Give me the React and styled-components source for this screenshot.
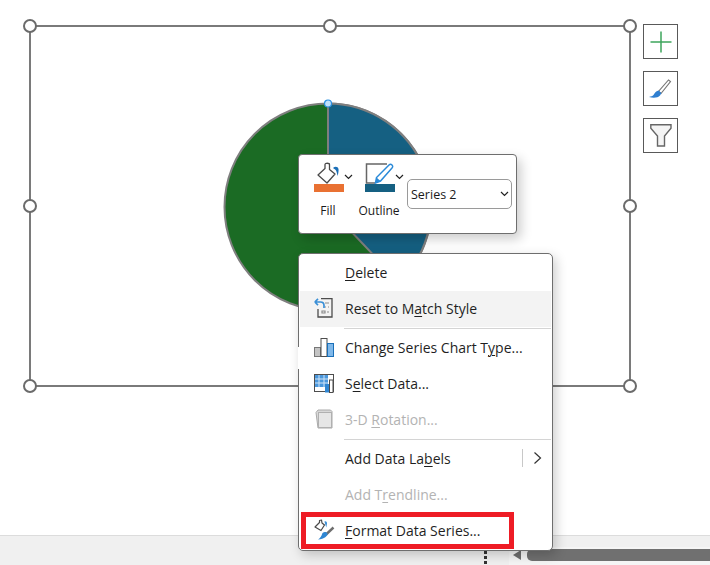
import React from "react";
import styled, { createGlobalStyle } from "styled-components";

const GlobalStyle = createGlobalStyle`
  html, body {
    margin: 0;
    padding: 0;
    background: #fff;
    overflow: hidden;
  }
  body {
    font-family: "Open Sans", "Liberation Sans", sans-serif;
  }
`;

const MENU_ITEMS = [
  { id: "delete", before: "", key: "D", after: "elete", raised: true },
  { id: "reset", before: "Reset to M", key: "a", after: "tch Style", icon: <ResetIcon />, hovered: true, raised: true, separator: 1 },
  { id: "type", before: "Change Series Chart T", key: "y", after: "pe...", icon: <ChartIcon /> },
  { id: "data", before: "S", key: "e", after: "lect Data...", icon: <TableIcon /> },
  { id: "rotate", before: "3-D ", key: "R", after: "otation...", icon: <CubeIcon />, disabled: true, separator: 2 },
  { id: "labels", before: "Add Data La", key: "b", after: "els", submenu: true },
  { id: "trend", before: "Add T", key: "r", after: "endline...", disabled: true },
  { id: "format", before: "", key: "F", after: "ormat Data Series...", icon: <FormatIcon />, highlighted: true },
];

const HANDLES = [
  [0, 0], [50, 0], [100, 0],
  [0, 50], [100, 50],
  [0, 100], [50, 100], [100, 100],
];

function ResetIcon() {
  return (
    <svg width="20" height="20" viewBox="0 0 20 20" fill="none">
      <path d="M7 .7H18V19H4V11" stroke="#4d4d4d" strokeWidth="1.300" />
      <path d="M11 5h4M11 9h1M14 9h1M8 13h3v2H8zM13 14h2" stroke="#8c8c8c" strokeWidth="1.200" />
      <path d="M.8 4 4 .8M.8 4 4 7.200M.8 4H6.500C8.500 4 10 5.500 10 7.500V10" stroke="#3a8fd6" strokeWidth="1.700" />
    </svg>
  );
}

function ChartIcon() {
  return (
    <svg width="20" height="21" viewBox="0 0 20 21">
      <rect x="0.500" y="10.500" width="6" height="9" fill="#c4c4c4" stroke="#777" />
      <rect x="7" y="1.500" width="6" height="18" fill="#fff" stroke="#4d4d4d" />
      <rect x="13.500" y="6.500" width="6" height="13" fill="#7fb8ea" stroke="#1a6fb8" />
    </svg>
  );
}

function TableIcon() {
  return (
    <svg width="20" height="19" viewBox="0 0 20 19">
      <rect x="0.500" y="0.500" width="19" height="17" fill="#fff" stroke="#4d4d4d" />
      <rect x="1" y="1" width="13" height="12" fill="#4a97dc" />
      <path d="M1 5h13M1 9h13M5 1v12M10 1v12" stroke="#cfe4f7" strokeWidth="1" />
      <rect x="11" y="10" width="4.500" height="8.500" fill="#2f86d2" />
      <rect x="15.500" y="6" width="3.500" height="12.500" fill="#fff" stroke="#4d4d4d" />
    </svg>
  );
}

function CubeIcon() {
  return (
    <svg width="18" height="20" viewBox="0 0 18 20">
      <path d="M1 3.500 3 1h12.500L17 2.500V19H3z" fill="#d8d8d8" stroke="#aaa" />
      <rect x="3.500" y="3.500" width="13" height="15" fill="#e6e6e6" stroke="#b0b0b0" />
    </svg>
  );
}

function FormatIcon() {
  return (
    <svg width="22" height="22" viewBox="0 0 22 22" fill="none">
      <path d="M2 8 6.500 3.500V1.500L8.500 1 9 4 11.500 6 8 11.500z" fill="#fff" stroke="#4a4a4a" strokeWidth="1.200" strokeLinejoin="round" />
      <path d="M11.500 2.500c1.500-.5 2.500.5 2.500 2l-.7 4-1-3z" fill="#3a8fd6" />
      <path d="M13 15.500 20.500 8.500" stroke="#6e6e6e" strokeWidth="2.400" />
      <path d="M9.500 14c2-1.500 4-1 5 .5 .3 2.500-3 5.500-9.500 6 2-1 3.500-3.500 4.500-6.500z" fill="#2f86d2" />
    </svg>
  );
}

function BrushIcon() {
  return (
    <svg width="24" height="20" viewBox="0 0 24 20" fill="none">
      <path d="M19.500 1 21.500 2.500 12 14.500 9.500 12.500z" fill="#fff" stroke="#777" strokeWidth="1.100" />
      <path d="M9.500 11.500C6.500 12 6 14 4.500 16 3.500 17 2 17.500 0 18c4 1.200 9 1 11-1.500l1.500-2.500z" fill="#2f7fd0" />
    </svg>
  );
}

function FunnelIcon() {
  return (
    <svg width="22" height="23" viewBox="0 0 22 23" fill="none">
      <path d="M.8 .8H21v3.500L14.500 12v10H7.500V12L.8 4.300z" fill="#f4f4f4" stroke="#666" strokeWidth="1.400" />
    </svg>
  );
}

const Chevron = () => (
  <svg width="9" height="6" viewBox="0 0 9 6" fill="none">
    <path d="M1 1 4.500 4.500 8 1" stroke="#222" strokeWidth="1.200" />
  </svg>
);

const App = () => (
  <Page>
    <GlobalStyle />
    <Sheet>
      <ChartFrame>
        <PieChart viewBox="0 0 212 212">
          <circle cx="106" cy="106" r="103.500" fill="#1b6b24" stroke="#7f7f7f" strokeWidth="2" />
          <path d="M106 106V2.500A103.500 103.500 0 0 1 177 181z" fill="#156082" stroke="#7f7f7f" strokeWidth="2" />
          <circle cx="106" cy="2.500" r="3.500" fill="#bfe0fb" stroke="#2a8fe0" strokeWidth="1.200" />
        </PieChart>
        <HandleLayer>
          {HANDLES.map(([x, y]) => (
            <Handle key={`${x}-${y}`} $x={x} $y={y} />
          ))}
        </HandleLayer>
      </ChartFrame>
      <SideTools>
        <SideButton>
          <svg width="22" height="22" viewBox="0 0 22 22">
            <path d="M11 .5v21M.5 11h21" stroke="#3ea55c" strokeWidth="1.500" />
          </svg>
        </SideButton>
        <SideButton><BrushIcon /></SideButton>
        <SideButton><FunnelIcon /></SideButton>
      </SideTools>
    </Sheet>
    <StatusBar>
      <StatusDots>
        <StatusDot />
        <StatusDot />
        <StatusDot />
      </StatusDots>
      <ScrollArea>
        <ScrollArrow />
        <ScrollThumb />
      </ScrollArea>
    </StatusBar>

    <MiniToolbar>
      <ToolGroup>
        <ToolTop>
          <ToolIcon>
            <svg width="30" height="22" viewBox="0 0 30 22" fill="none">
              <path d="M4 13 11 6.500V2.500C11 .8 15.500 .8 15.500 2.500V7.500L21 12 13 21z" fill="#fff" stroke="#4a4a4a" strokeWidth="1.300" strokeLinejoin="round" />
              <path d="M19 6c2-2 5-1.500 5.500 1 .3 2-.3 4-.7 7-.8-2-1-4-1.800-5.500-.7-1-1.500-1.500-3-2.500z" fill="#1a6fb8" />
            </svg>
            <Swatch $color="#e97132" />
          </ToolIcon>
          <Chevron />
        </ToolTop>
        <ToolLabel>Fill</ToolLabel>
      </ToolGroup>
      <ToolGroup>
        <ToolTop>
          <ToolIcon>
            <svg width="30" height="22" viewBox="0 0 30 22" fill="none">
              <path d="M22 2H1.500V21H10" stroke="#666" strokeWidth="1.500" />
              <path d="M10.500 21 11.500 15.500 24 3C26 1 29 4 27 6L15.500 19z" fill="#fff" stroke="#2b8ad8" strokeWidth="1.500" />
              <path d="M10.500 21 11.500 15.500 15.500 19z" fill="#2b8ad8" />
            </svg>
            <Swatch $color="#156082" />
          </ToolIcon>
          <Chevron />
        </ToolTop>
        <ToolLabel>Outline</ToolLabel>
      </ToolGroup>
      <SeriesSelect>
        <span>Series 2</span>
        <Chevron />
      </SeriesSelect>
    </MiniToolbar>

    <ContextMenu>
      {MENU_ITEMS.map((item) => (
        <React.Fragment key={item.id}>
          <MenuRow
            $hovered={item.hovered}
            $disabled={item.disabled}
            $highlighted={item.highlighted}
            $raised={item.raised}
          >
            <MenuIcon>{item.icon}</MenuIcon>
            <MenuText>
              {item.before}<u>{item.key}</u>{item.after}
            </MenuText>
            {item.submenu && (
              <SubmenuMark>
                <svg width="9" height="14" viewBox="0 0 9 14" fill="none">
                  <path d="M1.500 1.500 7.500 7 1.500 12.500" stroke="#333" strokeWidth="1.200" />
                </svg>
              </SubmenuMark>
            )}
          </MenuRow>
          {item.separator && <MenuSeparator $gap={item.separator} />}
        </React.Fragment>
      ))}
    </ContextMenu>
  </Page>
);

const Page = styled.div`
  position: relative;
  display: flex;
  flex-direction: column;
  width: 710px;
  height: 565px;
  overflow: hidden;
  background: #fff;
`;

const Sheet = styled.div`
  flex: 1;
  display: flex;
  align-items: flex-start;
  padding: 25px 0 0 29px;
`;

const ChartFrame = styled.div`
  position: relative;
  box-sizing: border-box;
  display: flex;
  align-items: center;
  justify-content: center;
  width: 602px;
  height: 362px;
  border: 2px solid #7a7a7a;
`;

const PieChart = styled.svg`
  width: 212px;
  height: 212px;
  margin-left: -4px;
  margin-top: 2px;
  overflow: visible;
`;

const HandleLayer = styled.div`
  position: absolute;
  inset: -1px;
`;

const Handle = styled.span`
  position: absolute;
  left: ${(p) => p.$x}%;
  top: ${(p) => p.$y}%;
  box-sizing: border-box;
  width: 14px;
  height: 14px;
  margin: -7px 0 0 -7px;
  border: 2px solid #6b6b6b;
  border-radius: 50%;
  background: #fff;
`;

const SideTools = styled.div`
  display: flex;
  flex-direction: column;
  gap: 12px;
  margin: -1px 0 0 12px;
`;

const SideButton = styled.div`
  box-sizing: border-box;
  display: flex;
  align-items: center;
  justify-content: center;
  width: 35px;
  height: 35px;
  border: 1px solid #595959;
  background: #fff;
`;

const StatusBar = styled.div`
  box-sizing: border-box;
  display: flex;
  align-items: flex-end;
  height: 30px;
  padding-left: 484px;
  background: #f0f0f0;
  border-top: 1px solid #dcdcdc;
`;

const StatusDots = styled.div`
  display: flex;
  flex-direction: column;
  gap: 2px;
  padding-bottom: 1px;
`;

const StatusDot = styled.span`
  width: 3px;
  height: 3px;
  background: #333;
`;

const ScrollArea = styled.div`
  flex: 1;
  display: flex;
  align-items: flex-start;
  gap: 6px;
  height: 18px;
  margin-left: 22px;
  padding: 2px 0 0 4px;
  box-sizing: border-box;
  background: #f5f5f5;
`;

const ScrollArrow = styled.span`
  width: 0;
  height: 0;
  margin-top: 1px;
  border-style: solid;
  border-width: 5px 8px 5px 0;
  border-color: transparent #6e6e6e transparent transparent;
`;

const ScrollThumb = styled.span`
  flex: 1;
  height: 12px;
  border-radius: 5px 0 0 5px;
  background: #707070;
`;

const MiniToolbar = styled.div`
  position: absolute;
  left: 298px;
  top: 154px;
  box-sizing: border-box;
  display: flex;
  align-items: flex-start;
  width: 219px;
  height: 80px;
  padding: 7px 0 0 15px;
  background: #fff;
  border: 1px solid #6e6e6e;
  border-radius: 4px;
  box-shadow: 4px 5px 12px rgba(0, 0, 0, 0.2);
`;

const ToolGroup = styled.div`
  display: flex;
  flex-direction: column;
  align-items: flex-start;
  width: 51px;
`;

const ToolTop = styled.div`
  display: flex;
  align-items: center;
`;

const ToolIcon = styled.div`
  display: flex;
  flex-direction: column;
  width: 30px;
  height: 30px;
  svg {
    display: block;
  }
`;

const Swatch = styled.span`
  flex: none;
  display: block;
  width: 30px;
  height: 8px;
  background: ${(p) => p.$color};
`;

const ToolLabel = styled.span`
  width: 30px;
  margin: 11px 0 0 -1px;
  display: flex;
  justify-content: center;
  font-size: 12px;
  line-height: 16px;
  white-space: nowrap;
  color: #1a1a1a;
`;

const SeriesSelect = styled.div`
  box-sizing: border-box;
  display: flex;
  align-items: center;
  justify-content: space-between;
  width: 105px;
  height: 30px;
  margin: 17px 0 0 -9px;
  padding: 0 2px 0 3px;
  border: 1px solid #9a9a9a;
  border-radius: 5px;
  font-size: 12.500px;
  color: #1a1a1a;
`;

const ContextMenu = styled.div`
  position: absolute;
  left: 298px;
  top: 253px;
  box-sizing: border-box;
  width: 255px;
  height: 298px;
  padding: 1px 1px 0;
  background: #fff;
  border: 1px solid #6e6e6e;
  border-radius: 5px;
  box-shadow: 3px 4px 12px rgba(0, 0, 0, 0.2);

  &::before {
    content: "";
    position: absolute;
    left: -1px;
    top: 93px;
    width: 1px;
    height: 22px;
    background: #fff;
  }
`;

const MenuRow = styled.div`
  position: relative;
  box-sizing: border-box;
  display: flex;
  align-items: center;
  height: 36px;
  padding-bottom: ${(p) => (p.$raised ? "2px" : "0")};
  background: ${(p) => (p.$hovered ? "#f3f3f3" : "transparent")};
  color: ${(p) => (p.$disabled ? "#b3b3b3" : "#1f1f1f")};
  ${(p) =>
    p.$highlighted &&
    `
    &::after {
      content: "";
      position: absolute;
      left: 1px;
      top: 0;
      width: 213px;
      height: 37px;
      box-sizing: border-box;
      border: 5px solid #ee1c25;
    }
  `}
`;

const MenuIcon = styled.span`
  flex: none;
  display: flex;
  align-items: center;
  justify-content: center;
  box-sizing: border-box;
  width: 45px;
  padding-left: 3px;
  svg {
    display: block;
  }
`;

const MenuText = styled.span`
  flex: 1;
  font-size: 14px;
  white-space: nowrap;
  u {
    text-underline-offset: 2px;
    text-decoration-thickness: 1px;
  }
`;

const SubmenuMark = styled.span`
  display: flex;
  align-items: center;
  justify-content: center;
  width: 28px;
  height: 18px;
  border-left: 1px solid #c8c8c8;
`;

const MenuSeparator = styled.div`
  height: 1px;
  margin: ${(p) => p.$gap}px 0 0 44px;
  background: #d4d4d4;
`;

export default App;
